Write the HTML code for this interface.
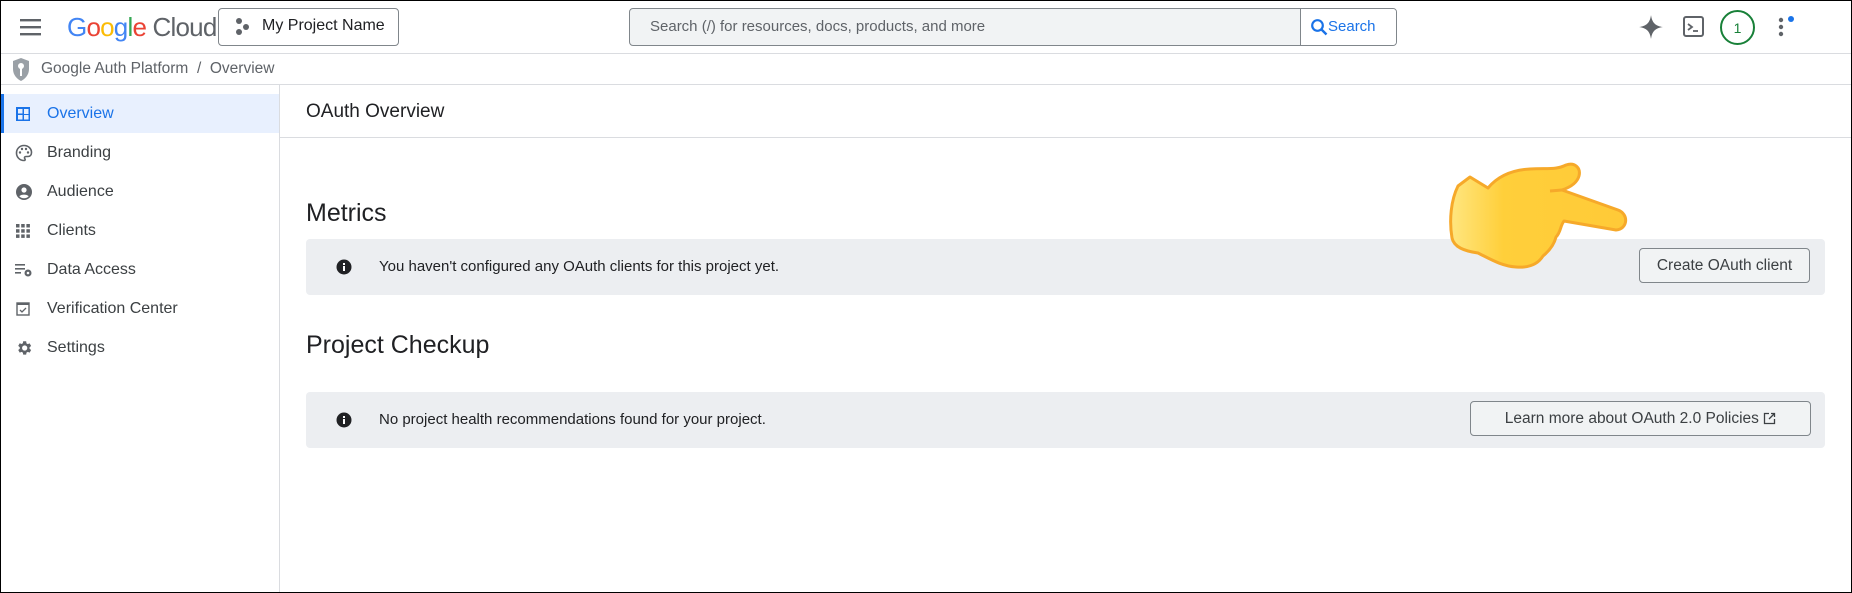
<!DOCTYPE html>
<html><head><meta charset="utf-8"><style>
*{box-sizing:border-box;margin:0;padding:0}
body{width:1852px;height:593px;overflow:hidden;background:#fff;font-family:"Liberation Sans",Arial,sans-serif;color:#202124;position:relative}
.frame{position:absolute;inset:0;border:1px solid #000;pointer-events:none;z-index:10}
.abs{position:absolute}
.hline{position:absolute;left:0;right:0;height:1px;background:#dadce0}
.nav{position:absolute;left:0;width:279px;height:39px;display:flex;align-items:center;font-size:16px;color:#3c4043}
.nav svg{position:absolute;left:15px}
.nav span{position:absolute;left:47px;top:11px}
.box{position:absolute;left:306px;width:1519px;background:#eceef1;border-radius:4px}
.btn{position:absolute;border:1px solid #80868b;border-radius:4px;background:#f1f3f4;font-size:15.5px;color:#3c4043;display:flex;align-items:center;justify-content:center}
</style></head><body>
<div class="frame"></div>
<svg class="abs" style="left:19px;top:17px" width="24" height="20" viewBox="0 0 24 20"><rect x="1" y="2" width="21" height="2.4" fill="#5f6368"/><rect x="1" y="9" width="21" height="2.4" fill="#5f6368"/><rect x="1" y="16" width="21" height="2.4" fill="#5f6368"/></svg>
<div class="abs" style="left:67px;top:12px;font-size:26px;letter-spacing:-0.8px"><span style="color:#4285f4">G</span><span style="color:#ea4335">o</span><span style="color:#fbbc05">o</span><span style="color:#4285f4">g</span><span style="color:#34a853">l</span><span style="color:#ea4335">e</span> <span style="color:#5f6368">Cloud</span></div>
<div class="abs" style="left:218px;top:8px;width:181px;height:38px;border:1px solid #80868b;border-radius:4px"></div>
<svg class="abs" style="left:235px;top:17px" width="16" height="20" viewBox="0 0 16 20"><circle cx="4" cy="4" r="3" fill="#5f6368"/><circle cx="11" cy="10" r="3" fill="#5f6368"/><circle cx="4" cy="15" r="3" fill="#5f6368"/></svg>
<div class="abs" style="left:262px;top:17px;font-size:16px;color:#202124">My Project Name</div>
<div class="abs" style="left:629px;top:8px;width:768px;height:38px;border:1px solid #80868b;border-radius:4px;background:#f1f3f4;overflow:hidden">
 <div class="abs" style="left:20px;top:9px;font-size:15px;color:#5f6368">Search (/) for resources, docs, products, and more</div>
 <div class="abs" style="left:670px;top:0;width:98px;height:36px;background:#fff;border-left:1px solid #80868b"></div>
 <svg class="abs" style="left:680px;top:9px" width="18" height="18" viewBox="0 0 18 18"><circle cx="7.5" cy="7.5" r="5.3" fill="none" stroke="#1a73e8" stroke-width="2.2"/><line x1="11.5" y1="11.5" x2="16.5" y2="16.5" stroke="#1a73e8" stroke-width="2.4"/></svg>
 <div class="abs" style="left:698px;top:9px;font-size:15px;color:#1a73e8">Search</div>
</div>
<svg class="abs" style="left:1638px;top:14px" width="26" height="26" viewBox="0 0 24 24"><path d="M12 1 C13 8 16 11 23 12 C16 13 13 16 12 23 C11 16 8 13 1 12 C8 11 11 8 12 1Z" fill="#5f6368"/></svg>
<svg class="abs" style="left:1683px;top:16px" width="21" height="21" viewBox="0 0 21 21"><rect x="1" y="1" width="19" height="19" rx="2" fill="none" stroke="#5f6368" stroke-width="2"/><path d="M5 8 L9 11 L5 14" fill="none" stroke="#5f6368" stroke-width="1.8"/><line x1="10" y1="15" x2="15" y2="15" stroke="#5f6368" stroke-width="1.8"/></svg>
<div class="abs" style="left:1720px;top:10px;width:35px;height:35px;border:2.5px solid #188038;border-radius:50%;font-size:14px;color:#188038;display:flex;align-items:center;justify-content:center">1</div>
<svg class="abs" style="left:1775px;top:12px" width="22" height="26" viewBox="0 0 22 26"><circle cx="6" cy="8" r="2.2" fill="#5f6368"/><circle cx="6" cy="15" r="2.2" fill="#5f6368"/><circle cx="6" cy="22" r="2.2" fill="#5f6368"/><circle cx="16" cy="7" r="3" fill="#1a73e8"/></svg>
<div class="hline" style="top:53px"></div>
<svg class="abs" style="left:12px;top:57px" width="18" height="25" viewBox="0 0 18 25"><path d="M9 1 L17 4 V12 C17 18 13 22 9 24 C5 22 1 18 1 12 V4Z" fill="#9aa0a6"/><circle cx="9" cy="9" r="3" fill="#fff"/><rect x="8" y="11" width="2" height="8" fill="#fff"/></svg>
<div class="abs" style="left:41px;top:60px;font-size:15.5px;color:#5f6368">Google Auth Platform &nbsp;/&nbsp; Overview</div>
<div class="hline" style="top:84px"></div>
<div class="abs" style="left:279px;top:85px;width:1px;bottom:0;background:#dadce0"></div>
<div class="abs" style="left:1px;top:94px;width:278px;height:39px;background:#e8f0fe;border-left:3px solid #1a73e8"></div>
<div class="nav" style="top:94px;color:#1a73e8"><svg width="16" height="16" viewBox="0 0 16 16"><rect x="1" y="1" width="14" height="14" fill="#1a73e8"/><rect x="3" y="3" width="4.5" height="4.5" fill="#e8f0fe"/><rect x="3" y="9" width="4.5" height="4.5" fill="#e8f0fe"/><rect x="9" y="3" width="4.5" height="10.5" fill="#e8f0fe"/><rect x="9" y="8" width="4.5" height="1" fill="#1a73e8"/></svg><span>Overview</span></div>
<div class="nav" style="top:133px"><svg width="18" height="18" viewBox="0 0 18 18"><path d="M9 1.5 C4.5 1.5 1.5 5 1.5 9 C1.5 13 4.5 16.5 9 16.5 C10.2 16.5 10.5 15.5 9.8 14.7 C9 13.8 9.6 12.5 11 12.5 H13 C15 12.5 16.5 11 16.5 8.5 C16.5 4.5 13.2 1.5 9 1.5Z" fill="none" stroke="#5f6368" stroke-width="1.6"/><circle cx="5" cy="8.5" r="1.2" fill="#5f6368"/><circle cx="7" cy="5" r="1.2" fill="#5f6368"/><circle cx="11" cy="5" r="1.2" fill="#5f6368"/><circle cx="13" cy="8.5" r="1.2" fill="#5f6368"/></svg><span>Branding</span></div>
<div class="nav" style="top:172px"><svg width="18" height="18" viewBox="0 0 18 18"><circle cx="9" cy="9" r="8" fill="#5f6368"/><circle cx="9" cy="7" r="2.6" fill="#fff"/><path d="M4.3 13.3 C6 11 12 11 13.7 13.3 C12.5 14.7 11 15.3 9 15.3 C7 15.3 5.5 14.7 4.3 13.3Z" fill="#fff"/></svg><span>Audience</span></div>
<div class="nav" style="top:211px"><svg width="16" height="16" viewBox="0 0 16 16" fill="#5f6368"><rect x="1" y="1" width="3.5" height="3.5"/><rect x="6.2" y="1" width="3.5" height="3.5"/><rect x="11.4" y="1" width="3.5" height="3.5"/><rect x="1" y="6.2" width="3.5" height="3.5"/><rect x="6.2" y="6.2" width="3.5" height="3.5"/><rect x="11.4" y="6.2" width="3.5" height="3.5"/><rect x="1" y="11.4" width="3.5" height="3.5"/><rect x="6.2" y="11.4" width="3.5" height="3.5"/><rect x="11.4" y="11.4" width="3.5" height="3.5"/></svg><span>Clients</span></div>
<div class="nav" style="top:250px"><svg width="18" height="16" viewBox="0 0 18 16"><rect x="0" y="2" width="10" height="1.6" fill="#5f6368"/><rect x="0" y="6" width="10" height="1.6" fill="#5f6368"/><rect x="0" y="10" width="6" height="1.6" fill="#5f6368"/><circle cx="13" cy="11" r="3.5" fill="#5f6368"/><circle cx="13" cy="11" r="1.3" fill="#fff"/></svg><span>Data Access</span></div>
<div class="nav" style="top:289px"><svg width="16" height="16" viewBox="0 0 16 16"><rect x="2" y="2" width="12" height="12" fill="none" stroke="#5f6368" stroke-width="1.4"/><rect x="2" y="2" width="12" height="2" fill="#5f6368"/><path d="M5 9 L7 11 L11 7" fill="none" stroke="#5f6368" stroke-width="1.3"/></svg><span>Verification Center</span></div>
<div class="nav" style="top:328px"><svg width="18" height="18" viewBox="0 0 24 24"><path fill="#5f6368" d="M19.4 13a7.5 7.5 0 0 0 0-2l2.1-1.6-2-3.5-2.5 1a7.3 7.3 0 0 0-1.7-1L14.9 3h-4l-.4 2.7a7.3 7.3 0 0 0-1.7 1l-2.5-1-2 3.5L6.4 11a7.5 7.5 0 0 0 0 2l-2.1 1.6 2 3.5 2.5-1a7.3 7.3 0 0 0 1.7 1l.4 2.7h4l.4-2.7a7.3 7.3 0 0 0 1.7-1l2.5 1 2-3.5zM12.9 15.5a3.5 3.5 0 1 1 0-7 3.5 3.5 0 0 1 0 7z"/></svg><span>Settings</span></div>
<div class="abs" style="left:306px;top:101px;font-size:19px;color:#202124">OAuth Overview</div>
<div class="abs" style="left:280px;right:0;top:137px;height:1px;background:#dadce0"></div>
<div class="abs" style="left:306px;top:199px;font-size:25px;color:#202124">Metrics</div>
<div class="box" style="top:239px;height:56px"></div>
<svg class="abs" style="left:336px;top:259px" width="16" height="16" viewBox="0 0 16 16"><circle cx="8" cy="8" r="7.5" fill="#202124"/><rect x="7" y="7" width="2" height="5" fill="#fff"/><rect x="7" y="4" width="2" height="2" fill="#fff"/></svg>
<div class="abs" style="left:379px;top:258px;font-size:15px;color:#202124">You haven't configured any OAuth clients for this project yet.</div>
<div class="btn" style="left:1639px;top:248px;width:171px;height:35px">Create OAuth client</div>
<div class="abs" style="left:306px;top:331px;font-size:25px;color:#202124">Project Checkup</div>
<div class="box" style="top:392px;height:56px"></div>
<svg class="abs" style="left:336px;top:412px" width="16" height="16" viewBox="0 0 16 16"><circle cx="8" cy="8" r="7.5" fill="#202124"/><rect x="7" y="7" width="2" height="5" fill="#fff"/><rect x="7" y="4" width="2" height="2" fill="#fff"/></svg>
<div class="abs" style="left:379px;top:411px;font-size:15px;color:#202124">No project health recommendations found for your project.</div>
<div class="btn" style="left:1470px;top:401px;width:341px;height:35px">Learn more about OAuth 2.0 Policies&nbsp;<svg width="13" height="13" viewBox="0 0 13 13"><path d="M6 1.5H1.5V11.5H11.5V7" fill="none" stroke="#3c4043" stroke-width="1.3"/><path d="M8 1.5H11.5V5M11.5 1.5L6 7" fill="none" stroke="#3c4043" stroke-width="1.3"/></svg></div>
<svg class="abs" style="left:1430px;top:150px" width="210" height="130" viewBox="0 0 210 130">
<defs><linearGradient id="g" x1="0" x2="1"><stop offset="0" stop-color="#ffe680"/><stop offset="0.3" stop-color="#ffcf3a"/><stop offset="1" stop-color="#ffca38"/></linearGradient></defs>
<path d="M40 27 L58 38 C68 26 82 20 100 19 C118 18 126 20 136 15 C145 12 151 18 149 26 C147 33 141 37 132 40 L188 60 C199 64 198 79 186 80 L134 71 C130 76 131 82 126 87 C124 95 119 101 113 106 C108 114 99 118 86 117 C72 116 62 110 48 103 C34 101 24 97 22 88 C19 70 21 50 28 36 Z" fill="url(#g)" stroke="#f6a92a" stroke-width="3" stroke-linejoin="round"/>
<path d="M120 41 L132 40" stroke="#f6a92a" stroke-width="3"/>
</svg>
</body></html>
